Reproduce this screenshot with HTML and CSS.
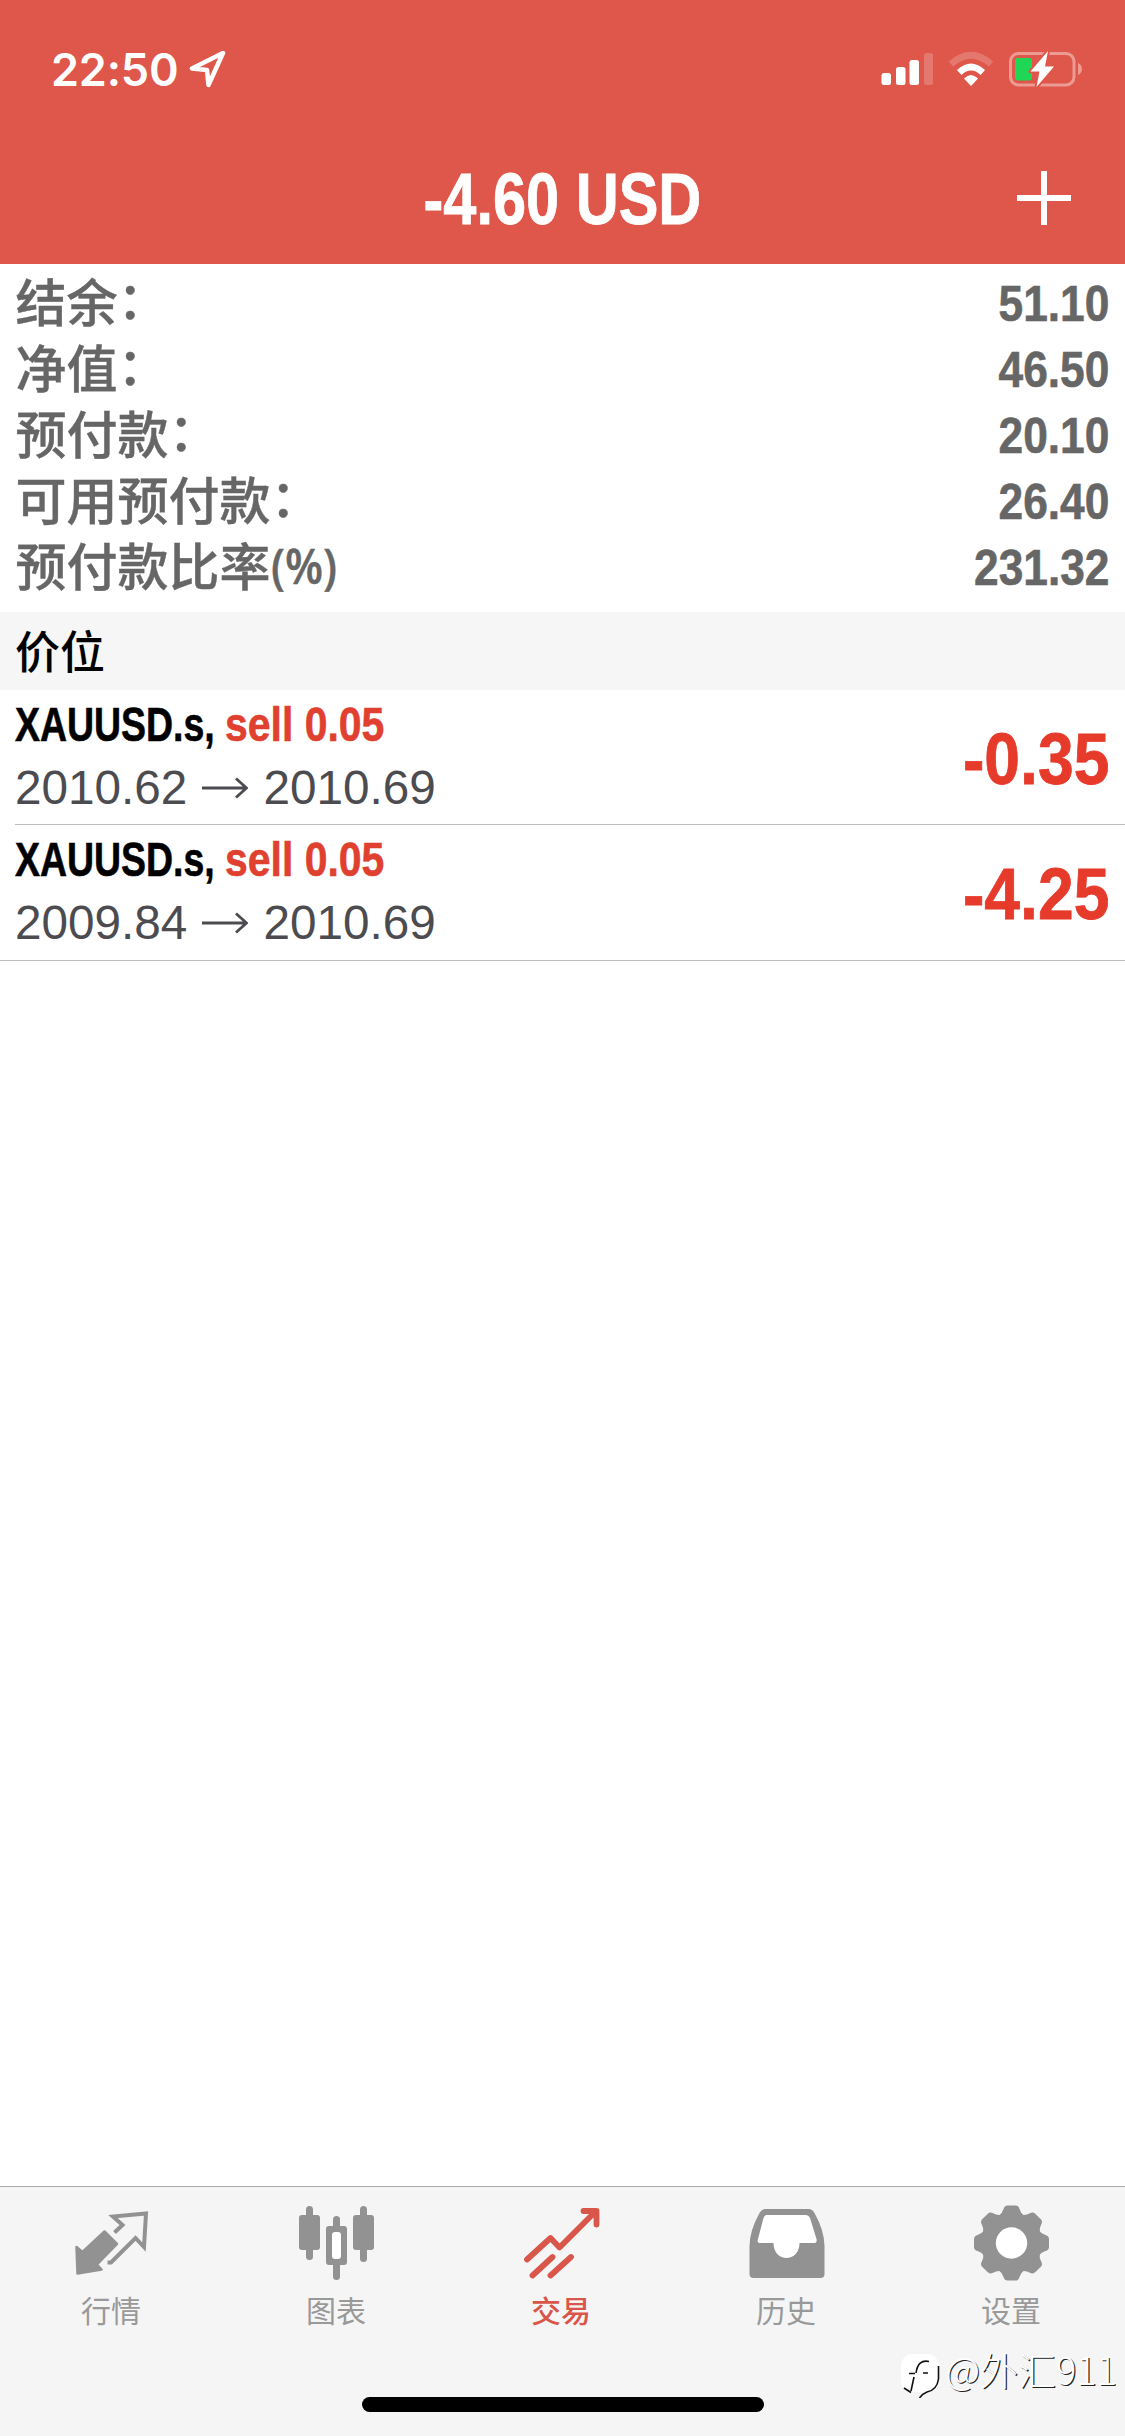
FILE: index.html
```html
<!DOCTYPE html>
<html lang="zh-CN">
<head>
<meta charset="utf-8">
<title>交易</title>
<link rel="stylesheet" href="styles.css">
</head>
<body>
<div class="app">
  <header class="header">
    <div class="status">
      <span class="time">22:50</span>
      <svg class="locate" width="37" height="38" viewBox="0 0 37 38"><path d="M34 3 L3 18.500 L18 20 L19.500 35 Z" fill="none" stroke="#fff" stroke-width="4.500" stroke-linejoin="round"/></svg>
      <svg class="indicators" width="204" height="40" viewBox="880 49 204 40">
        <g fill="#fff">
          <rect x="881.500" y="73" width="9.500" height="12" rx="2.500"/>
          <rect x="896" y="67" width="9.500" height="18" rx="2.500"/>
          <rect x="909.500" y="60" width="9.500" height="25" rx="2.500"/>
          <rect x="924" y="53" width="9" height="32" rx="2.500" opacity=".2"/>
          <path d="M971 86 L964 78.500 Q971 71.500 978 78.500 Z"/>
        </g>
        <path d="M959.200 72.500 Q971 61.500 982.800 72.500" fill="none" stroke="#fff" stroke-width="6.500"/>
        <path d="M951 64 Q971 46.500 991 64" fill="none" stroke="#fff" stroke-width="6.500" opacity=".2"/>
        <rect x="1010.500" y="53.500" width="63.500" height="31.500" rx="8" fill="none" stroke="#fff" stroke-width="3" opacity=".4"/>
        <path d="M1078 63 Q1082 65 1082 69 Q1082 73 1078 75 Z" fill="#fff" opacity=".4"/>
        <rect x="1015" y="58" width="17" height="22.500" rx="3" fill="#1fd755"/>
        <path d="M1048 51 L1030.500 71.500 H1039.500 L1036.500 87 L1054 66.500 H1045 Z" fill="#fff" stroke="#df574a" stroke-width="4" paint-order="stroke" stroke-linejoin="round"/>
      </svg>
    </div>
    <div class="titlebar">
      <h1 class="cond title">-4.60 USD</h1>
      <svg class="plus" width="54" height="54" viewBox="0 0 54 54"><path d="M27 0V54M0 27H54" stroke="#fff" stroke-width="6"/></svg>
    </div>
  </header>

  <section class="summary">
    <div class="line"><span class="label">结余<span class="colon">：</span></span><span class="cond amount">51.10</span></div>
    <div class="line"><span class="label">净值<span class="colon">：</span></span><span class="cond amount">46.50</span></div>
    <div class="line"><span class="label">预付款<span class="colon">：</span></span><span class="cond amount">20.10</span></div>
    <div class="line"><span class="label">可用预付款<span class="colon">：</span></span><span class="cond amount">26.40</span></div>
    <div class="line"><span class="label">预付款比率<span class="unit">(%)</span></span><span class="cond amount">231.32</span></div>
  </section>

  <h2 class="section-title">价位</h2>

  <ul class="positions">
    <li class="position">
      <div>
        <div class="instrument"><span class="cond symbol">XAUUSD.s,</span><span class="cond side">sell 0.05</span></div>
        <div class="prices"><span>2010.62</span><svg class="arrow" width="46" height="22" viewBox="0 0 46 22"><path d="M0 11H44M34 1.500L44.500 11L34 20.500" fill="none" stroke="#4c4c50" stroke-width="2.800"/></svg><span>2010.69</span></div>
      </div>
      <span class="cond profit">-0.35</span>
    </li>
    <li class="position">
      <div>
        <div class="instrument"><span class="cond symbol">XAUUSD.s,</span><span class="cond side">sell 0.05</span></div>
        <div class="prices"><span>2009.84</span><svg class="arrow" width="46" height="22" viewBox="0 0 46 22"><path d="M0 11H44M34 1.500L44.500 11L34 20.500" fill="none" stroke="#4c4c50" stroke-width="2.800"/></svg><span>2010.69</span></div>
      </div>
      <span class="cond profit">-4.25</span>
    </li>
  </ul>

  <footer class="footer">
    <nav class="tabs">
      <a class="tab">
        <svg width="80" height="80" viewBox="72.500 2203 80 80"><path d="M76 2247 L82 2252 L104 2231.500 L116.500 2244 L96.500 2264.500 L101 2269.500 L77 2273.500 Z" fill="#929292" stroke="#929292" stroke-width="2.500" stroke-linejoin="round"/><path d="M114 2232.500 L122 2225 L112.500 2216.500 L145.500 2213.500 L143.500 2247 L135 2238 L110.500 2262.500 H107" fill="none" stroke="#929292" stroke-width="4"/></svg>
        <span>行情</span>
      </a>
      <a class="tab">
        <svg width="80" height="80" viewBox="298 2203 80 80"><g fill="#929292"><rect x="306" y="2206" width="7" height="54" rx="3.500"/><rect x="299" y="2215" width="21" height="35" rx="3"/><rect x="333" y="2216" width="7" height="64" rx="3.500"/><rect x="326" y="2226" width="21" height="39" rx="3"/><rect x="360" y="2206" width="7" height="56" rx="3.500"/><rect x="353" y="2215" width="21" height="35" rx="3"/></g><rect x="332" y="2232" width="9" height="27" rx="3" fill="#fff"/></svg>
        <span>图表</span>
      </a>
      <a class="tab active">
        <svg width="80" height="80" viewBox="522.500 2203 80 80"><path d="M526.500 2259.500 L550 2238 L559 2247.500 L595 2211.500 M583 2211 H596 V2224.500 M532 2275.500 L552 2257 M550 2275.500 L570.500 2257" fill="none" stroke="#d9564a" stroke-width="5.800" stroke-linecap="round" stroke-linejoin="round"/></svg>
        <span>交易</span>
      </a>
      <a class="tab">
        <svg width="80" height="80" viewBox="747.500 2203 80 80"><path d="M765 2209 H808 Q812 2209 814 2213 Q824 2231 824 2246 V2274 Q824 2278 820 2278 H753 Q749 2278 749 2274 V2246 Q749 2231 759 2213 Q761 2209 765 2209 Z" fill="#929292"/><path d="M766 2215 H805 Q808 2215 809.500 2218 L816 2239 Q817 2243 813 2243 H799 C799 2263 773 2263 773 2243 H760 Q756 2243 757.500 2239 L763 2218 Q764 2215 766 2215 Z" fill="#fff"/></svg>
        <span>历史</span>
      </a>
      <a class="tab">
        <svg width="80" height="80" viewBox="-38.500 -40 80 80"><g fill="#929292"><circle r="30"/><g id="teeth"><path id="tooth" d="M-13 -27 Q-9 -30 -8 -34 Q-7 -37.500 -4 -37.500 H4 Q7 -37.500 8 -34 Q9 -30 13 -27 Z"/><use href="#tooth" transform="rotate(45)"/><use href="#tooth" transform="rotate(90)"/><use href="#tooth" transform="rotate(135)"/></g><use href="#teeth" transform="rotate(180)"/></g><circle r="15.700" fill="#fff"/></svg>
        <span>设置</span>
      </a>
    </nav>
    <div class="home-indicator"></div>
    <div class="watermark">
      <svg width="46" height="50" viewBox="898 2348 46 50"><rect x="901" y="2354" width="38" height="38" rx="12" fill="#fff"/><path d="M929 2361.500 Q918 2359 916 2373 M909 2373.500 H915 M923 2373 H928 M914 2377 L911 2391 M904 2388 L911 2392.500 M938.500 2366 V2379 Q937 2390 927 2392 Q922 2394 919.500 2398" fill="none" stroke="#111" stroke-width="1.600"/></svg>
      <span>@外汇911</span>
    </div>
  </footer>
</div>
</body>
</html>
```
FILE: styles.css
```css
* { box-sizing: border-box; }

body {
  margin: 0;
  background: #fff;
  font-family: "Liberation Sans", "Noto Sans CJK SC", sans-serif;
}

h1, h2, ul { margin: 0; padding: 0; }

.app {
  display: flex;
  flex-direction: column;
  width: 1125px;
  height: 2436px;
  overflow: hidden;
}

/* Condensed bold face, narrowed from the regular-width bold. */
.cond {
  display: block;
  font-weight: 700;
  white-space: nowrap;
  transform: scaleX(var(--squeeze, 0.87));
}

.header {
  height: 264px;
  background: #df574a;
  color: #fff;
}

.status {
  display: flex;
  align-items: center;
  height: 132px;
  padding: 6px 41px 0 51px;
}

.time {
  width: 138px;
  padding-top: 1px;
  font: 600 45px/60px Inter, sans-serif;
  letter-spacing: -0.2px;
}

.indicators { margin-left: auto; }

.titlebar {
  display: grid;
  grid-template-columns: 1fr auto 1fr;
  align-items: center;
  height: 132px;
  padding: 0 54px;
}

.title {
  --squeeze: 0.815;
  grid-column: 2;
  padding-top: 1px;
  font-size: 73px;
  line-height: 80px;
  -webkit-text-stroke: 0.8px currentColor;
}

.plus { justify-self: end; }

.summary {
  height: 348px;
  padding: 6px 16px 0 15.5px;
  color: #666;
}

.line {
  display: flex;
  justify-content: space-between;
  height: 66px;
  line-height: 66px;
}

.label {
  margin-top: -3px;
  font: 500 51px/66px "Noto Sans CJK SC", sans-serif;
  -webkit-text-stroke: 0.4px currentColor;
}

.colon {
  display: inline-block;
  transform: translate(0, -3px);
}

.unit {
  display: inline-block;
  font: 600 49px/60px "Open Sans", sans-serif;
  transform: translateY(-2px) scaleX(0.9);
  transform-origin: left;
}

.amount {
  --squeeze: 0.877;
  padding-top: 1px;
  font-size: 50.5px;
  transform-origin: right;
  -webkit-text-stroke: 0.6px currentColor;
}

.section-title {
  height: 78px;
  padding-left: 15px;
  background: #f6f6f6;
  color: #000;
  font: 500 45px/76px "Noto Sans CJK SC", sans-serif;
}

.positions {
  border-bottom: 1px solid #bcbcbe;
  list-style: none;
}

.position {
  display: flex;
  justify-content: space-between;
  height: 135px;
  padding: 7px 16px 0 15px;
}

.position:first-child { background: linear-gradient(#bcbcbe, #bcbcbe) 15px 100% / 100% 1px no-repeat; }

.instrument {
  display: flex;
  height: 56px;
  font-size: 48px;
  line-height: 56px;
  -webkit-text-stroke: 0.6px currentColor;
}

.symbol {
  --squeeze: 0.78;
  width: 210px;
  color: #000;
  transform-origin: left;
}

.side {
  --squeeze: 0.853;
  color: #e0402f;
  transform-origin: left;
}

.prices {
  display: flex;
  align-items: center;
  gap: 15px;
  color: #4c4c50;
  font-size: 47.7px;
  line-height: 69px;
}

.profit {
  --squeeze: 0.88;
  color: #e63a2b;
  font-size: 73px;
  line-height: 124px;
  transform-origin: right;
  -webkit-text-stroke: 0.8px currentColor;
}

.footer {
  position: relative;
  height: 250px;
  margin-top: auto;
  padding-top: 16px;
  border-top: 1px solid #aaa;
  background: #f5f5f5;
}

.tabs {
  display: grid;
  grid-template-columns: repeat(5, 1fr);
}

.tab {
  display: flex;
  flex-direction: column;
  align-items: center;
  color: #999;
  font: 400 30px/48px "Noto Sans CJK SC", sans-serif;
}

.tab span {
  margin: 2px 0 2px;
  padding-right: 3px;
}

.active {
  color: #d9564a;
  font-weight: 500;
}

.home-indicator {
  width: 402px;
  height: 15px;
  margin: 62px auto 0;
  border-radius: 8px;
  background: #000;
}

/* Stamped over the bar's lower right corner. */
.watermark {
  position: absolute;
  right: 8px;
  bottom: 38px;
  display: flex;
  align-items: center;
  gap: 1.5px;
  color: #fff;
  font: 300 38px/50px "Noto Sans CJK SC", sans-serif;
  text-shadow: 1.2px 1.2px 0 #222;
}

.watermark span { margin-top: -8px; }
```
